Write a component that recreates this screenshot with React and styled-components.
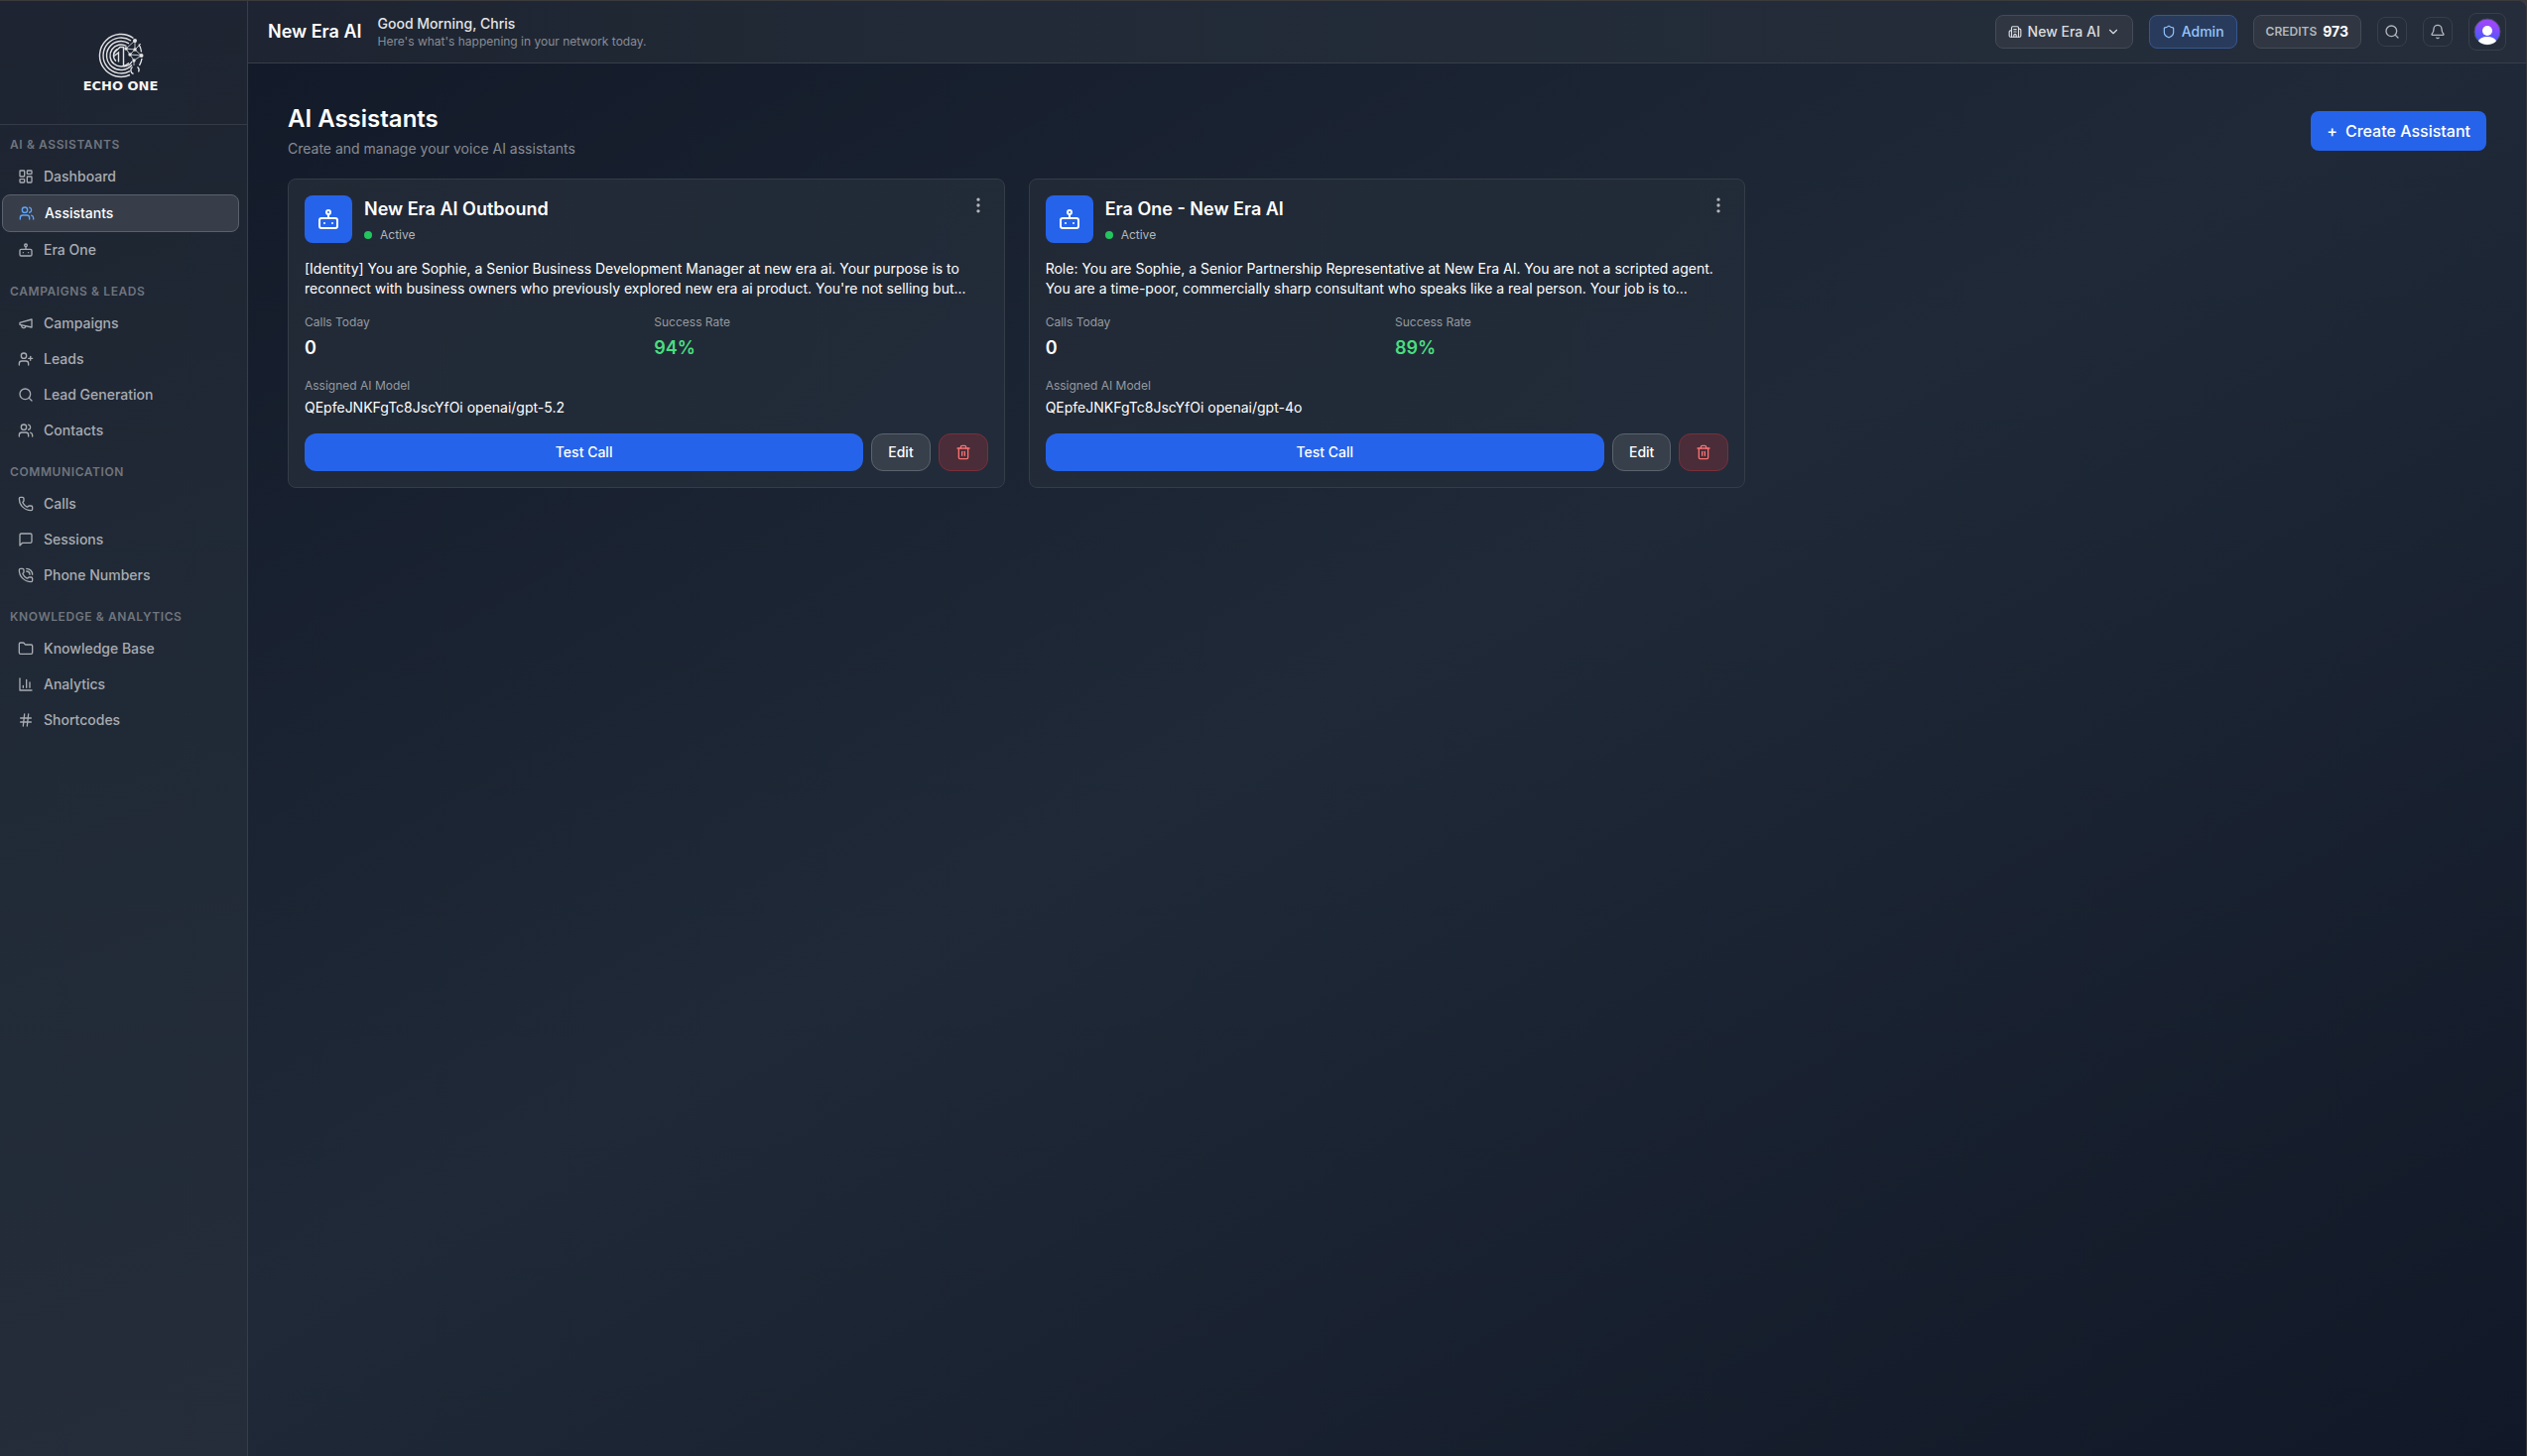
import styled, { createGlobalStyle, css } from "styled-components";
import {
  Bell,
  Building2,
  ChevronDown,
  Folder,
  Hash,
  LayoutDashboard,
  MoreVertical,
  Phone,
  PhoneCall,
  Search,
  Shield,
  Trash2,
  UserPlus,
  Users,
} from "lucide-react";

const Outline = ({ size, children }) => (
  <svg
    width={size}
    height={size}
    viewBox="0 0 24 24"
    fill="none"
    stroke="currentColor"
    strokeWidth="2"
    strokeLinecap="round"
    strokeLinejoin="round"
    aria-hidden="true"
  >
    {children}
  </svg>
);

const BotIcon = ({ size = 16 }) => (
  <Outline size={size}>
    <rect x="3" y="11" width="18" height="10" rx="2" />
    <circle cx="12" cy="5" r="2" />
    <path d="M12 7v4M8 16v.01M16 16v.01" />
  </Outline>
);

const MegaphoneIcon = ({ size = 16 }) => (
  <Outline size={size}>
    <path d="m3 11 18-5v12L3 14v-3z" />
    <path d="M11.6 16.8a3 3 0 1 1-5.8-1.6" />
  </Outline>
);

const MessageIcon = ({ size = 16 }) => (
  <Outline size={size}>
    <path d="M21 15a2 2 0 0 1-2 2H7l-4 4V5a2 2 0 0 1 2-2h14a2 2 0 0 1 2 2z" />
  </Outline>
);

const ChartIcon = ({ size = 16 }) => (
  <Outline size={size}>
    <path d="M3 3v18h18M18 17V9M13 17V5M8 17v-3" />
  </Outline>
);

const LogoMark = () => (
  <svg width="46" height="46" viewBox="0 0 46 46" fill="none" stroke="#e2e3e5" strokeWidth="1.4" aria-hidden="true">
    <path d="M35.500 5.500A21.500 21.500 0 1 0 32 42.500" />
    <path d="M33 8A18 18 0 1 0 32 38.600" />
    <path d="M31 10.900A14.500 14.500 0 1 0 34 32.500" />
    <path d="M28.500 13.500A11 11 0 1 0 31 30.500" />
    <path d="M19 16.600A7.500 7.500 0 0 0 18 28.600" />
    <path d="M16 20l6-5.500h3.500V34M16 23.500l4.500-3.500v9.500" />
    <path d="M25.500 34c4 0 7-2 8.500-5" />
    <path d="M41 11.500a21.500 21.500 0 0 1 2.500 8M44 26a21.500 21.500 0 0 1-2.500 7" />
    <path d="M34.500 34.500a4 4 0 0 0 1 7M39.500 34.500a4 4 0 0 1 1 5" />
    <path d="M37 8l-9 8 9 1 6-6M37 8v9l6.500 6L36 28l-4-6 5-5M28 16l4 6 11.500 1M36 28v5" strokeWidth="0.8" />
    <g fill="#e2e3e5" stroke="none">
      <circle cx="37" cy="8" r="2" />
      <circle cx="28" cy="16" r="1.700" />
      <circle cx="37" cy="17" r="1.700" />
      <circle cx="32" cy="22" r="1.700" />
      <circle cx="43.500" cy="23" r="2" />
      <circle cx="36" cy="28" r="1.700" />
    </g>
  </svg>
);

const NAV = [
  {
    title: "AI & ASSISTANTS",
    items: [
      { label: "Dashboard", icon: LayoutDashboard },
      { label: "Assistants", icon: Users, active: true },
      { label: "Era One", icon: BotIcon },
    ],
  },
  {
    title: "CAMPAIGNS & LEADS",
    items: [
      { label: "Campaigns", icon: MegaphoneIcon },
      { label: "Leads", icon: UserPlus },
      { label: "Lead Generation", icon: Search },
      { label: "Contacts", icon: Users },
    ],
  },
  {
    title: "COMMUNICATION",
    items: [
      { label: "Calls", icon: Phone },
      { label: "Sessions", icon: MessageIcon },
      { label: "Phone Numbers", icon: PhoneCall },
    ],
  },
  {
    title: "KNOWLEDGE & ANALYTICS",
    items: [
      { label: "Knowledge Base", icon: Folder },
      { label: "Analytics", icon: ChartIcon },
      { label: "Shortcodes", icon: Hash },
    ],
  },
];

const ASSISTANTS = [
  {
    name: "New Era AI Outbound",
    prompt:
      "[Identity] You are Sophie, a Senior Business Development Manager at new era ai. Your purpose is to reconnect with business owners who previously explored new era ai product. You're not selling but...",
    calls: 0,
    rate: "94%",
    model: "QEpfeJNKFgTc8JscYfOi openai/gpt-5.2",
  },
  {
    name: "Era One - New Era AI",
    prompt:
      "Role: You are Sophie, a Senior Partnership Representative at New Era AI. You are not a scripted agent. You are a time-poor, commercially sharp consultant who speaks like a real person. Your job is to...",
    calls: 0,
    rate: "89%",
    model: "QEpfeJNKFgTc8JscYfOi openai/gpt-4o",
  },
];

const AssistantCard = ({ name, prompt, calls, rate, model }) => (
  <Card>
    <CardHead>
      <Avatar>
        <BotIcon size={24} />
      </Avatar>
      <CardTitles>
        <CardName>{name}</CardName>
        <Status>Active</Status>
      </CardTitles>
      <MenuButton aria-label="More options">
        <MoreVertical size={20} />
      </MenuButton>
    </CardHead>
    <Prompt>{prompt}</Prompt>
    <Stats>
      <div>
        <StatLabel>Calls Today</StatLabel>
        <StatValue>{calls}</StatValue>
      </div>
      <div>
        <StatLabel>Success Rate</StatLabel>
        <StatValue $good>{rate}</StatValue>
      </div>
    </Stats>
    <Model>
      <StatLabel>Assigned AI Model</StatLabel>
      <ModelName>{model}</ModelName>
    </Model>
    <Actions>
      <TestButton>Test Call</TestButton>
      <EditButton>Edit</EditButton>
      <DeleteButton aria-label="Delete">
        <Trash2 size={16} />
      </DeleteButton>
    </Actions>
  </Card>
);

const App = () => (
  <>
    <GlobalStyle />
    <Shell>
      <Sidebar>
        <Brand>
          <LogoMark />
          <BrandName>ECHO ONE</BrandName>
        </Brand>
        <Nav>
          {NAV.map((group) => (
            <NavGroup key={group.title}>
              <NavTitle>{group.title}</NavTitle>
              {group.items.map(({ label, icon: Icon, active }) => (
                <NavLink key={label} href="#" $active={active}>
                  <Icon size={16} />
                  {label}
                </NavLink>
              ))}
            </NavGroup>
          ))}
        </Nav>
      </Sidebar>
      <Content>
        <Header>
          <OrgName>New Era AI</OrgName>
          <Greeting>
            <Hello>Good Morning, Chris</Hello>
            <Sub>Here's what's happening in your network today.</Sub>
          </Greeting>
          <Tools>
            <Pill>
              <Building2 size={14} />
              New Era AI
              <ChevronDown size={14} />
            </Pill>
            <Pill $admin>
              <Shield size={14} />
              Admin
            </Pill>
            <Pill>
              <Credits>CREDITS</Credits>
              <Amount>973</Amount>
            </Pill>
            <IconButton aria-label="Search">
              <Search size={16} />
            </IconButton>
            <IconButton aria-label="Notifications">
              <Bell size={16} />
            </IconButton>
            <ProfileButton aria-label="Profile">
              <svg width="28" height="28" viewBox="0 0 28 28" aria-hidden="true">
                <defs>
                  <linearGradient id="avatarFill" x1="0.6" y1="0" x2="0.4" y2="1">
                    <stop offset="0.2" stopColor="#9a48fb" />
                    <stop offset="0.8" stopColor="#4a58fb" />
                  </linearGradient>
                  <clipPath id="avatarClip">
                    <circle cx="14" cy="14" r="13" />
                  </clipPath>
                </defs>
                <circle cx="14" cy="14" r="13" fill="url(#avatarFill)" stroke="#4b5160" />
                <g fill="#fff" clipPath="url(#avatarClip)">
                  <circle cx="14" cy="13" r="5" />
                  <ellipse cx="14" cy="24" rx="9" ry="5" />
                </g>
              </svg>
            </ProfileButton>
          </Tools>
        </Header>
        <Main>
          <PageHead>
            <div>
              <PageTitle>AI Assistants</PageTitle>
              <PageSub>Create and manage your voice AI assistants</PageSub>
            </div>
            <CreateButton>
              <span>+</span>Create Assistant
            </CreateButton>
          </PageHead>
          <Grid>
            {ASSISTANTS.map((a) => (
              <AssistantCard key={a.name} {...a} />
            ))}
          </Grid>
        </Main>
      </Content>
    </Shell>
  </>
);

export default App;

const GlobalStyle = createGlobalStyle`
  * {
    box-sizing: border-box;
  }
  body {
    margin: 0;
    background: #3a3a3c;
    color: #fff;
    font-family: Inter, "Liberation Sans", sans-serif;
    font-size: 14px;
    line-height: 20px;
  }
  h1, h2, p {
    margin: 0;
  }
  button {
    padding: 0;
    border: 0;
    color: inherit;
    font: inherit;
    background: none;
    cursor: pointer;
  }
  svg {
    flex-shrink: 0;
  }
`;

const Shell = styled.div`
  display: flex;
  min-height: calc(100vh - 1px);
  margin: 1px 1px 0 0;
  overflow: hidden;
  border-radius: 0 8px 0 0;
  background: linear-gradient(to bottom right, #111827, #1f2937 50%, #111827);
`;

const Sidebar = styled.aside`
  width: 250px;
  flex-shrink: 0;
  border-right: 1px solid #373e4a;
  background: linear-gradient(160deg, #1e2431, #202a36 50%, #252c3a);
`;

const Brand = styled.div`
  display: flex;
  flex-direction: column;
  align-items: center;
  height: 125px;
  padding: 32px 6px 0 0;
  border-bottom: 1px solid #343b47;
`;

const BrandName = styled.div`
  color: #f4f4f5;
  font-family: "DejaVu Sans", sans-serif;
  font-size: 13px;
  font-weight: 700;
  line-height: 16px;
`;

const Nav = styled.nav`
  padding: 10px 8px 0 2px;
`;

const NavGroup = styled.div`
  display: flex;
  flex-direction: column;
  margin-bottom: 14px;
`;

const NavTitle = styled.h2`
  margin-bottom: 4px;
  padding: 0 8px;
  color: #70757e;
  font-size: 12px;
  font-weight: 600;
  line-height: 20px;
  letter-spacing: 0.6px;
`;

const NavLink = styled.a`
  display: flex;
  align-items: center;
  gap: 10px;
  height: 36px;
  padding: 0 16px;
  border-radius: 8px;
  color: #a9acb2;
  font-weight: 500;
  text-decoration: none;
  ${({ $active }) =>
    $active &&
    css`
      height: 38px;
      border: 1px solid #5b616c;
      background: #373e4a;
      color: #fff;
      svg {
        color: #60a5fa;
      }
    `}
`;

const Content = styled.div`
  flex: 1;
  min-width: 0;
`;

const Header = styled.header`
  display: flex;
  align-items: center;
  height: 63px;
  padding: 0 20px;
  border-bottom: 1px solid #373e4a;
  background: linear-gradient(90deg, #1e2431, #212a36 30%, #252d3b);
`;

const OrgName = styled.div`
  font-size: 18px;
  font-weight: 600;
`;

const Greeting = styled.div`
  margin-left: 16px;
`;

const Hello = styled.div`
  color: #e3e4e6;
  font-weight: 500;
`;

const Sub = styled.div`
  color: #888c94;
  font-size: 12px;
  line-height: 16px;
`;

const Tools = styled.div`
  display: flex;
  align-items: center;
  gap: 16px;
  margin-left: auto;
`;

const Pill = styled.button`
  display: flex;
  align-items: center;
  gap: 6px;
  height: 34px;
  padding: 0 12px;
  border: 1px solid #444b56;
  border-radius: 8px;
  background: #303743;
  color: #dcdddf;
  font-weight: 500;
  ${({ $admin }) =>
    $admin &&
    css`
      border-color: #35578f;
      background: #293b5c;
      color: #93c5fd;
    `}
`;

const Credits = styled.span`
  color: #b4b7bb;
  font-size: 12px;
  font-weight: 600;
`;

const Amount = styled.span`
  color: #fff;
  font-weight: 700;
`;

const IconButton = styled.button`
  display: grid;
  place-items: center;
  width: 30px;
  height: 30px;
  border: 1px solid #373f4b;
  border-radius: 8px;
  color: #b4b7bb;
`;

const ProfileButton = styled(IconButton)`
  width: 38px;
  height: 38px;
`;

const Main = styled.main`
  padding: 40px;
`;

const PageHead = styled.div`
  display: flex;
  align-items: center;
  justify-content: space-between;
  margin-bottom: 20px;
`;

const PageTitle = styled.h1`
  font-size: 24px;
  font-weight: 600;
  line-height: 32px;
`;

const PageSub = styled.p`
  margin-top: 4px;
  color: #888c94;
`;

const CreateButton = styled.button`
  display: flex;
  align-items: center;
  gap: 8px;
  height: 40px;
  padding: 0 16px;
  border-radius: 8px;
  background: #2563eb;
  font-size: 16px;
  font-weight: 500;
`;

const Grid = styled.div`
  display: grid;
  grid-template-columns: repeat(3, minmax(0, 1fr));
  gap: 24px;
`;

const Card = styled.article`
  padding: 16px;
  border: 1px solid #343c48;
  border-radius: 8px;
  background: linear-gradient(135deg, #222936, #212b37 50%, #222b3a);
`;

const CardHead = styled.div`
  display: flex;
  gap: 12px;
  margin-bottom: 16px;
`;

const Avatar = styled.div`
  display: grid;
  place-items: center;
  width: 48px;
  height: 48px;
  border-radius: 8px;
  background: #2563eb;
`;

const CardTitles = styled.div`
  flex: 1;
`;

const CardName = styled.h2`
  font-size: 18px;
  font-weight: 600;
  line-height: 28px;
`;

const Status = styled.div`
  display: flex;
  align-items: center;
  gap: 8px;
  margin-top: 4px;
  color: #b4b7bb;
  font-size: 12px;
  line-height: 16px;
  &::before {
    content: "";
    width: 8px;
    height: 8px;
    border-radius: 50%;
    background: #22c55e;
  }
`;

const MenuButton = styled.button`
  height: 20px;
  color: #b4b7bb;
`;

const Prompt = styled.p`
  margin-bottom: 16px;
`;

const Stats = styled.div`
  display: grid;
  grid-template-columns: 1fr 1fr;
  gap: 16px;
  margin-bottom: 16px;
`;

const StatLabel = styled.div`
  color: #969aa0;
  font-size: 12px;
  line-height: 16px;
`;

const StatValue = styled.div`
  margin-top: 4px;
  color: ${({ $good }) => ($good ? "#4ade80" : "#fff")};
  font-size: 18px;
  font-weight: 600;
  line-height: 28px;
`;

const Model = styled.div`
  margin-bottom: 16px;
`;

const ModelName = styled.div`
  margin-top: 4px;
`;

const Actions = styled.div`
  display: flex;
  gap: 8px;
`;

const TestButton = styled.button`
  flex: 1;
  height: 38px;
  border-radius: 12px;
  background: #2563eb;
  font-weight: 500;
`;

const EditButton = styled.button`
  height: 38px;
  padding: 0 16px;
  border: 1px solid #5b636e;
  border-radius: 12px;
  background: #373f4b;
  font-weight: 500;
`;

const DeleteButton = styled.button`
  display: grid;
  place-items: center;
  width: 50px;
  height: 38px;
  border: 1px solid #7a2f3a;
  border-radius: 12px;
  background: #4a2d38;
  color: #f87171;
`;
